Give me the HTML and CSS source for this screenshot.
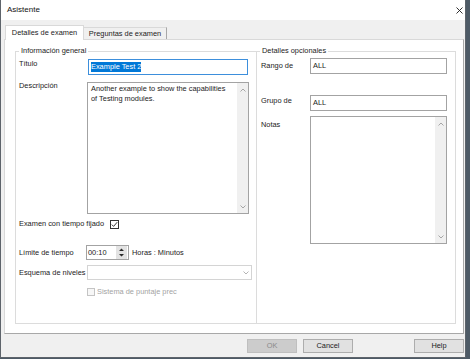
FILE: index.html
```html
<!DOCTYPE html>
<html lang="es">
  <head>
    <meta charset="UTF-8" />
    <meta name="viewport" content="width=device-width, initial-scale=1.0" />
    <title>Asistente</title>

    <link rel="stylesheet" href="styles.css">
  </head>
  <body>
    <div class="window">
      <div class="titlebar">
        <span>Asistente</span>
        <svg class="close" width="7" height="7" viewBox="0 0 7 7">
          <path d="M0.5 0.5 L6.5 6.5 M6.5 0.5 L0.5 6.5" stroke="#1a1a1a" stroke-width="0.9" fill="none" />
        </svg>
      </div>

      <div class="client">
        <div class="tabs">
          <div class="tab active">Detalles de examen</div>
          <div class="tab">Preguntas de examen</div>
        </div>

        <div class="panel">
          <fieldset class="group general">
            <legend>Información general</legend>

            <div class="row r-title">
              <span class="lbl">Título</span>
              <div class="field text focus"><span class="sel">Example Test 2</span></div>
            </div>

            <div class="row r-desc">
              <span class="lbl">Descripción</span>
              <div class="field memo">
                <div class="memo-text">Another example to show the capabilities<br>of Testing modules.</div>
                <div class="vscroll">
                  <svg width="6" height="4" viewBox="0 0 6 4"><path d="M0.5 3.5 L3 1 L5.5 3.5" stroke="#a6a6a6" fill="none" /></svg>
                  <svg width="6" height="4" viewBox="0 0 6 4"><path d="M0.5 0.5 L3 3 L5.5 0.5" stroke="#a6a6a6" fill="none" /></svg>
                </div>
              </div>
            </div>

            <div class="row r-timed">
              <span>Examen con tiempo fijado</span>
              <span class="check on">
                <svg width="7" height="7" viewBox="0 0 7 7"><path d="M0.8 3.6 L2.6 5.4 L6.2 1.2" stroke="#222" stroke-width="0.9" fill="none" /></svg>
              </span>
            </div>

            <div class="row r-limit">
              <span class="lbl">Límite de tiempo</span>
              <div class="field spin">
                <span>00:10</span>
                <svg class="spin-btn" width="11" height="13" viewBox="0 0 11 13">
                  <rect x="0" y="0" width="11" height="13" fill="#e3e3e3" />
                  <path d="M3 5 L5.5 2.5 L8 5 Z M3 8 L5.5 10.5 L8 8 Z" fill="#2a2a2a" />
                </svg>
              </div>
              <span class="unit">Horas : Minutos</span>
            </div>

            <div class="row r-scheme">
              <span class="lbl">Esquema de niveles</span>
              <div class="field combo">
                <svg width="6" height="4" viewBox="0 0 6 4"><path d="M0.5 0.5 L3 3 L5.5 0.5" stroke="#b4b4b4" fill="none" /></svg>
              </div>
            </div>

            <div class="row r-preset">
              <span class="check off"></span>
              <span class="muted">Sistema de puntaje prec</span>
            </div>
          </fieldset>

          <fieldset class="group optional">
            <legend>Detalles opcionales</legend>

            <div class="row r-range">
              <span class="lbl">Rango de</span>
              <div class="field text">ALL</div>
            </div>

            <div class="row r-group">
              <span class="lbl">Grupo de</span>
              <div class="field text">ALL</div>
            </div>

            <div class="row r-notes">
              <span class="lbl">Notas</span>
              <div class="field memo">
                <div class="memo-text"></div>
                <div class="vscroll">
                  <svg width="6" height="4" viewBox="0 0 6 4"><path d="M0.5 3.5 L3 1 L5.5 3.5" stroke="#a6a6a6" fill="none" /></svg>
                  <svg width="6" height="4" viewBox="0 0 6 4"><path d="M0.5 0.5 L3 3 L5.5 0.5" stroke="#a6a6a6" fill="none" /></svg>
                </div>
              </div>
            </div>
          </fieldset>
        </div>

        <div class="buttons">
          <button class="btn" disabled>OK</button>
          <button class="btn">Cancel</button>
          <button class="btn help">Help</button>
        </div>
      </div>
    </div>
  </body>
</html>
```

FILE: styles.css
```css
*,
*::before,
*::after {
  box-sizing: border-box;
  margin: 0;
  padding: 0;
}

body {
  background: #4d5a66;
  font-family: "Liberation Sans", Arial, sans-serif;
  font-size: 7.4px;
  line-height: 10px;
  color: #1b1b1b;
}

.window {
  width: 466px;
  height: 358px;
  display: flex;
  flex-direction: column;
  background: #f0f0f0;
  border: 1px solid #5e646b;
  border-top: 0;
}

.titlebar {
  height: 20px;
  flex: none;
  display: flex;
  align-items: center;
  justify-content: space-between;
  padding: 0 2px 0 6px;
  background: #fff;
  font-size: 8px;
  color: #111;
}

.client {
  flex: 1;
  display: flex;
  flex-direction: column;
  padding-left: 3px;
}

/* tabs */

.tabs {
  height: 19px;
  flex: none;
  display: flex;
  align-items: flex-end;
  padding-left: 1px;
}

.tab {
  width: 83px;
  height: 12px;
  border: 1px solid #d9d9d9;
  border-left: 0;
  border-right-color: #a8a8a8;
  border-bottom: 0;
  background: #f0f0f0;
  text-align: center;
  line-height: 11px;
}

.tab.active {
  width: 79px;
  height: 15px;
  margin-bottom: -1px;
  position: relative;
  z-index: 1;
  border-left: 1px solid #d9d9d9;
  border-right-color: #d9d9d9;
  background: #fff;
  line-height: 14px;
}

.panel {
  width: 460px;
  height: 295px;
  flex: none;
  display: flex;
  padding: 6px 7px 9px 10px;
  background: #fff;
  border: 1px solid #d9d9d9;
  border-right-color: #a8a8a8;
  border-bottom-color: #a8a8a8;
}

/* group boxes */

.group {
  flex: none;
  min-width: 0;
  border: 1px solid #dcdcdc;
  padding: 0 0 0 3px;
}

.group legend {
  padding: 0 2px;
  line-height: 10px;
}

.general {
  width: 241px;
  border-right: 0;
}

.optional {
  width: 200px;
  padding-left: 4px;
}

.optional legend {
  margin-left: -1px;
}

.row {
  display: flex;
  align-items: flex-start;
}

.lbl {
  width: 68px;
  flex: none;
}

.optional .lbl {
  width: 49px;
}

.field {
  flex: none;
  border: 1px solid #a3a3a3;
  background: #fff;
}

.text {
  width: 160px;
  height: 16px;
  padding: 2px 0 0 2px;
}

.optional .text {
  width: 137px;
}

.focus {
  border-color: #3d8fdc;
}

.sel {
  display: inline-block;
  background: #0078d7;
  color: #fff;
  line-height: 10px;
  margin-top: -1px;
}

.memo {
  width: 162px;
  height: 132px;
  display: flex;
}

.memo-text {
  flex: 1;
  padding: 1px 0 0 3px;
  color: #222;
}

.vscroll {
  width: 11px;
  flex: none;
  display: flex;
  flex-direction: column;
  justify-content: space-between;
  align-items: center;
  padding: 5px 0 4px;
  background: #f0f0f0;
}

.vscroll svg {
  display: block;
}

.check {
  width: 9px;
  height: 9px;
  flex: none;
  display: flex;
  align-items: center;
  justify-content: center;
  border: 1px solid #333;
  background: #fff;
}

.check.off {
  width: 8px;
  height: 8px;
  border-color: #c4c4c4;
  background: #f7f7f7;
}

.muted {
  margin-left: 2px;
  color: #a3a3a3;
}

/* left column rows */

.r-title {
  margin-top: 3px;
}

.r-title .text {
  margin-left: 1px;
}

.r-desc {
  margin-top: 7px;
}

.r-desc .lbl {
  margin-top: -1px;
}

.r-timed {
  margin-top: 5px;
  height: 10px;
  align-items: center;
}

.r-timed .check {
  margin-left: 6px;
}

.r-limit {
  margin-top: 16px;
  align-items: center;
}

.spin {
  width: 43px;
  height: 15px;
  margin-left: -1px;
  display: flex;
  align-items: center;
  justify-content: space-between;
  padding: 0 1px 0 1px;
}

.spin-btn {
  display: block;
}

.unit {
  margin-left: 3px;
}

.r-scheme {
  margin-top: 5px;
  align-items: center;
}

.combo {
  width: 165px;
  height: 15px;
  display: flex;
  align-items: center;
  justify-content: flex-end;
  padding-right: 2px;
  border-color: #d4d4d4;
}

.r-preset {
  height: 10px;
  margin-top: 7px;
  margin-left: 68px;
  align-items: center;
  white-space: nowrap;
}

/* right column rows */

.r-range {
  margin-top: 2px;
}

.r-range .lbl {
  margin-top: 3px;
}

.r-group {
  margin-top: 21px;
}

.r-group .lbl {
  margin-top: 1px;
}

.r-notes {
  margin-top: 5px;
}

.r-notes .lbl {
  margin-top: 4px;
}

.r-notes .memo {
  width: 137px;
  height: 128px;
}

/* dialog buttons */

.buttons {
  margin-top: 5px;
  display: flex;
  justify-content: flex-end;
  padding-right: 1px;
}

.btn {
  width: 50px;
  height: 14px;
  border: 1px solid #adadad;
  background: #e1e1e1;
  font: inherit;
  line-height: 12px;
  color: #1b1b1b;
  text-align: center;
}

.btn + .btn {
  margin-left: 6px;
}

.btn:disabled {
  background: #cccccc;
  border-color: #bfbfbf;
  color: #8a8a8a;
}

.btn.help {
  margin-left: 61px;
}
```
